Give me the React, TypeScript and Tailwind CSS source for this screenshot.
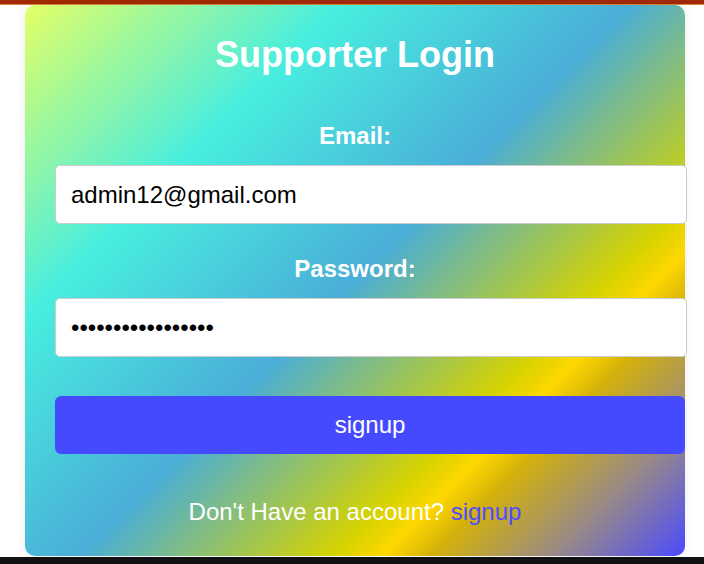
import React from 'react'

export default function App() {
  return (
    <div className="flex min-h-[564px] flex-col bg-white font-['Liberation_Sans',Arial,sans-serif]">
      <div className="h-[4px] bg-[#a32a00]" />
      <div className="h-px bg-[#d8893c]" />

      <div className="pl-[25px]">
        <div className="flex w-[660px] flex-col rounded-[10px] bg-[linear-gradient(135deg,#e4ff66_0%,#48eedf_26%,#4aaed8_50%,#d6d300_71%,#ffd700_75%,#d3b10a_79%,#998a86_89%,#4a4aff_100%)] p-[30px] text-center shadow-[0_0_12px_rgba(0,0,0,0.08)]">
          <h2 className="text-[36px] font-bold leading-[40px] text-white">Supporter Login</h2>

          <label className="mt-[48px] text-[24px] font-bold leading-[26px] text-white">Email:</label>
          <input
            className="mt-[16px] box-content h-[27px] w-full rounded-[5px] border border-[#cccccc] bg-white px-[15px] py-[15px] text-left text-[24px] text-black outline-none"
            defaultValue="admin12@gmail.com"
            readOnly
          />

          <label className="mt-[32px] text-[24px] font-bold leading-[26px] text-white">Password:</label>
          <input
            type="password"
            className="mt-[16px] box-content h-[27px] w-full rounded-[5px] border border-[#cccccc] bg-white px-[15px] py-[15px] text-left text-[24px] text-black outline-none"
            defaultValue="admin12@gmail.com"
            readOnly
          />

          <button className="mt-[39px] box-content w-full rounded-[6px] bg-[#454aff] px-[15px] py-[15px] text-[24px] leading-[28px] text-white">
            signup
          </button>

          <p className="mt-[44px] text-[24px] leading-[28px] text-white">
            Don't Have an account? <a className="text-[#4d4dff]">signup</a>
          </p>
        </div>
      </div>

      <div className="mt-px flex-1 bg-[#111114]" />
    </div>
  )
}
